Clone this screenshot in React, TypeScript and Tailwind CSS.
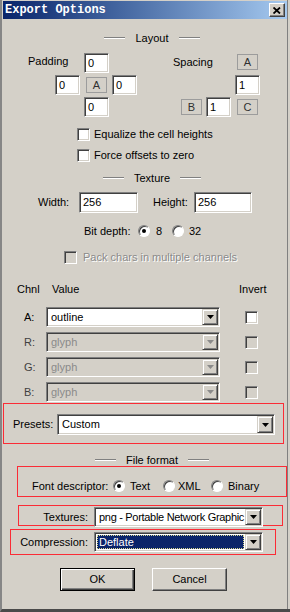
import React from "react";

const sunken =
  "border border-t-[#808080] border-l-[#808080] border-b-white border-r-white shadow-[inset_1px_1px_0_#404040,inset_-1px_-1px_0_#d4d0c8]";

function Head({ label, className }: { label: string; className: string }) {
  return (
    <div className={`flex items-center justify-center pl-[15px] leading-[14px] ${className}`}>
      <div className="w-[21px] h-[2px] border-t border-b border-t-[#808080] border-b-white" />
      <span className="mx-[10px]">{label}</span>
      <div className="w-[21px] h-[2px] border-t border-b border-t-[#808080] border-b-white" />
    </div>
  );
}

function RedBox({ className, children }: { className: string; children: React.ReactNode }) {
  return <div className={`shrink-0 border border-red-500 ${className}`}>{children}</div>;
}

function Field({ value, className }: { value: string; className: string }) {
  return (
    <div className={`${sunken} bg-white pl-[3px] flex items-center shrink-0 ${className}`}>
      {value}
    </div>
  );
}

function Tag({ children }: { children: React.ReactNode }) {
  return (
    <div className="w-[21px] h-[16px] border border-[#9c9c9c] flex items-center justify-center text-[#303030] shrink-0">
      {children}
    </div>
  );
}

function Check({ disabled }: { disabled?: boolean }) {
  return (
    <div
      className={`w-[13px] h-[13px] shrink-0 ${sunken} ${disabled ? "bg-[#d4d0c8]" : "bg-white"}`}
    />
  );
}

function Radio({ on }: { on?: boolean }) {
  return (
    <div className="w-[12px] h-[12px] shrink-0 rounded-full bg-white border border-t-[#808080] border-l-[#808080] border-b-white border-r-white shadow-[inset_1px_1px_0_#404040] flex items-center justify-center">
      {on && <div className="w-[4px] h-[4px] rounded-full bg-black" />}
    </div>
  );
}

function DropBtn({ disabled }: { disabled?: boolean }) {
  return (
    <div className="w-[16px] h-full shrink-0 bg-[#d4d0c8] border border-t-[#d4d0c8] border-l-[#d4d0c8] border-b-[#404040] border-r-[#404040] shadow-[inset_1px_1px_0_#fff,inset_-1px_-1px_0_#808080] flex items-center justify-center">
      <svg width="7" height="4" viewBox="0 0 7 4">
        <polygon points="0,0 7,0 3.5,4" fill={disabled ? "#8a8a8a" : "#000"} />
      </svg>
    </div>
  );
}

function Combo({
  text,
  className,
  disabled,
  selected,
  tight,
}: {
  text: string;
  className: string;
  disabled?: boolean;
  selected?: boolean;
  tight?: boolean;
}) {
  return (
    <div
      className={`${sunken} p-[1px] flex shrink-0 ${disabled ? "bg-[#d4d0c8]" : "bg-white"} ${className}`}
    >
      <div className="flex-1 min-w-0 flex items-center overflow-hidden">
        {selected ? (
          <div className="mx-[1px] flex-1 h-[14px] bg-[#0a246a] text-white border border-dotted border-[#d8d890] flex items-center pl-[1px] whitespace-nowrap">
            {text}
          </div>
        ) : (
          <span
            className={`pl-[3px] whitespace-nowrap ${tight ? "tracking-[-0.3px]" : ""} ${disabled ? "text-[#8a8a8a]" : ""}`}
          >
            {text}
          </span>
        )}
      </div>
      <DropBtn disabled={disabled} />
    </div>
  );
}

export default function App() {
  const channels = [
    { ch: "A:", value: "outline", disabled: false },
    { ch: "R:", value: "glyph", disabled: true },
    { ch: "G:", value: "glyph", disabled: true },
    { ch: "B:", value: "glyph", disabled: true },
  ];

  return (
    <div className="w-[290px] h-[612px] bg-[#d4d0c8] flex border-l-2 border-l-[#868686] border-b-[3px] border-b-[#4a4a4a] font-['Liberation_Sans',Arial,sans-serif] text-[11px] text-black leading-none overflow-hidden">
      <div className="w-[285px] flex flex-col pt-[1px]">
        {/* title bar */}
        <div className="ml-[1px] w-[284px] h-[18px] shrink-0 flex items-center justify-between bg-gradient-to-r from-[#0a246a] to-[#a6caf0]">
          <span className="pl-[2px] font-['Liberation_Mono',monospace] font-bold text-[12px] text-white">
            Export Options
          </span>
          <div className="mr-[2px] w-[16px] h-[14px] bg-[#d4d0c8] border border-t-white border-l-white border-b-[#404040] border-r-[#404040] shadow-[inset_-1px_-1px_0_#808080] flex items-center justify-center">
            <svg width="8" height="7" viewBox="0 0 8 7">
              <path d="M0.5 0.5 L7 6.5 M7 0.5 L0.5 6.5" stroke="#000" strokeWidth="1.8" />
            </svg>
          </div>
        </div>

        <Head label="Layout" className="mt-[12px] h-[14px]" />

        {/* padding / spacing */}
        <div className="mt-[8px] flex">
          <div className="ml-[26px] w-[109px] flex flex-col gap-[2px]">
            <div className="flex">
              <div className="w-[56px] pt-[1px] leading-[14px]">Padding</div>
              <Field value="0" className="w-[25px] h-[20px]" />
            </div>
            <div className="flex items-center ml-[27px]">
              <Field value="0" className="w-[25px] h-[20px]" />
              <div className="ml-[4px] w-[25px] flex justify-center">
                <Tag>A</Tag>
              </div>
              <Field value="0" className="ml-[3px] w-[25px] h-[20px]" />
            </div>
            <div className="flex ml-[56px]">
              <Field value="0" className="w-[25px] h-[20px]" />
            </div>
          </div>
          <div className="ml-[36px] w-[87px] flex flex-col gap-[2px]">
            <div className="flex h-[20px]">
              <div className="w-[62px] pt-[2px] leading-[14px]">Spacing</div>
              <div className="w-[25px] pt-[1px] flex justify-center">
                <Tag>A</Tag>
              </div>
            </div>
            <div className="flex ml-[62px]">
              <Field value="1" className="w-[25px] h-[20px]" />
            </div>
            <div className="flex items-center ml-[8px]">
              <Tag>B</Tag>
              <Field value="1" className="ml-[4px] w-[25px] h-[20px]" />
              <div className="ml-[4px] w-[25px] flex justify-center">
                <Tag>C</Tag>
              </div>
            </div>
          </div>
        </div>

        <div className="mt-[10px] h-[14px] flex items-center ml-[75px]">
          <Check />
          <span className="ml-[4px]">Equalize the cell heights</span>
        </div>
        <div className="mt-[7px] h-[14px] flex items-center ml-[75px]">
          <Check />
          <span className="ml-[4px]">Force offsets to zero</span>
        </div>

        <Head label="Texture" className="mt-[9px] h-[14px]" />

        <div className="mt-[7px] flex items-center ml-[36px]">
          <span className="w-[41px]">Width:</span>
          <Field value="256" className="w-[59px] h-[21px]" />
          <span className="ml-[15px] w-[41px]">Height:</span>
          <Field value="256" className="w-[58px] h-[21px]" />
        </div>

        <div className="mt-[11px] h-[14px] flex items-center ml-[82px]">
          <span className="w-[54px]">Bit depth:</span>
          <Radio on />
          <span className="ml-[6px] w-[16px]">8</span>
          <Radio />
          <span className="ml-[5px]">32</span>
        </div>

        <div className="mt-[12px] h-[14px] flex items-center ml-[62px]">
          <Check disabled />
          <span className="ml-[6px] text-[#8a8a8a] [text-shadow:1px_1px_0_#fff]">
            Pack chars in multiple channels
          </span>
        </div>

        <div className="mt-[18px] h-[14px] flex items-center ml-[15px]">
          <span className="w-[35px]">Chnl</span>
          <span className="w-[187px]">Value</span>
          <span>Invert</span>
        </div>

        <div className="mt-[11px] flex flex-col gap-[5px]">
          {channels.map((c) => (
            <div key={c.ch} className="h-[20px] flex items-center ml-[22px]">
              <span className={`w-[22px] ${c.disabled ? "text-[#404040]" : ""}`}>{c.ch}</span>
              <Combo
                text={c.value}
                disabled={c.disabled}
                className="w-[174px] h-[20px]"
              />
              <div className="ml-[25px]">
                <Check disabled={c.disabled} />
              </div>
            </div>
          ))}
        </div>

        {/* presets */}
        <RedBox className="mt-[1px] ml-[1px] w-[281px] h-[41px] pt-[10px] pl-[9px]">
          <div className="flex items-center">
            <span className="w-[44px]">Presets:</span>
            <Combo text="Custom" className="w-[218px] h-[21px]" />
          </div>
        </RedBox>

        <Head label="File format" className="mt-[10px] h-[12px]" />

        <RedBox className="ml-[15px] w-[270px] h-[31px] pt-[12px] pl-[14px]">
          <div className="h-[14px] flex items-center">
            <span className="w-[81px]">Font descriptor:</span>
            <Radio on />
            <span className="ml-[5px] w-[33px]">Text</span>
            <Radio />
            <span className="ml-[3px] w-[33px]">XML</span>
            <Radio />
            <span className="ml-[5px]">Binary</span>
          </div>
        </RedBox>

        <RedBox className="mt-[8px] ml-[16px] w-[265px] h-[21px] pt-[1px]">
          <div className="flex items-center">
            <span className="w-[69px] text-right">Textures:</span>
            <Combo
              text="png - Portable Network Graphic"
              tight
              className="ml-[6px] w-[169px] h-[20px]"
            />
          </div>
        </RedBox>

        <RedBox className="mt-[3px] ml-[8px] w-[266px] h-[26px] pt-[2px]">
          <div className="flex items-center">
            <span className="w-[77px] text-right">Compression:</span>
            <Combo text="Deflate" selected className="ml-[6px] w-[169px] h-[20px]" />
          </div>
        </RedBox>

        <div className="mt-[13px] ml-[58px] flex gap-[17px]">
          <div className="w-[75px] h-[23px] flex items-center justify-center bg-[#d4d0c8] border border-black shadow-[inset_1px_1px_0_#fff,inset_-1px_-1px_0_#404040,inset_-2px_-2px_0_#808080]">
            OK
          </div>
          <div className="w-[75px] h-[23px] flex items-center justify-center bg-[#d4d0c8] border border-t-white border-l-white border-b-[#404040] border-r-[#404040] shadow-[inset_-1px_-1px_0_#808080]">
            Cancel
          </div>
        </div>
      </div>
      <div className="w-[1px] bg-[#808080]" />
      <div className="w-[2px]" />
    </div>
  );
}
